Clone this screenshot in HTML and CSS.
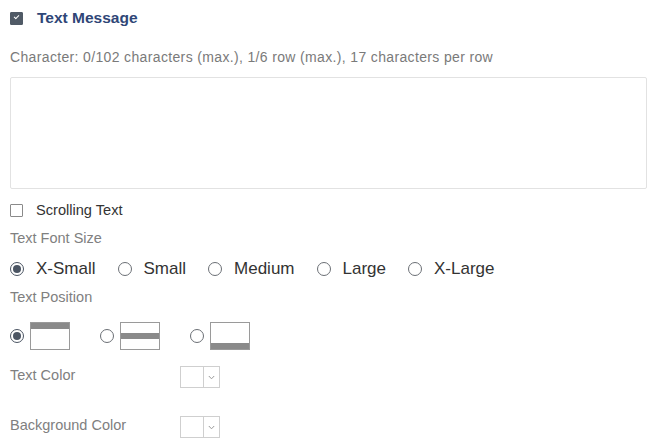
FILE: index.html
```html
<!DOCTYPE html>
<html lang="en">
<head>
    <meta charset="UTF-8">
    <meta name="viewport" content="width=device-width, initial-scale=1.0">
    <title>Text Message</title>
    <link rel="stylesheet" href="styles.css">
</head>
<body>
    <div class="panel">
        <label class="title">
            <input type="checkbox" class="check check-dark" checked>
            <span>Text Message</span>
        </label>

        <div class="hint">Character: 0/102 characters (max.), 1/6 row (max.), 17 characters per row</div>

        <textarea class="message"></textarea>

        <label class="scroll-row">
            <input type="checkbox" class="check">
            <span>Scrolling Text</span>
        </label>

        <div class="field-label label-size">Text Font Size</div>
        <div class="radio-row">
            <label class="radio-item"><input type="radio" name="size" class="radio" checked>X-Small</label>
            <label class="radio-item"><input type="radio" name="size" class="radio">Small</label>
            <label class="radio-item"><input type="radio" name="size" class="radio">Medium</label>
            <label class="radio-item"><input type="radio" name="size" class="radio">Large</label>
            <label class="radio-item"><input type="radio" name="size" class="radio">X-Large</label>
        </div>

        <div class="field-label label-position">Text Position</div>
        <div class="position-row">
            <label class="pos-item">
                <input type="radio" name="pos" class="radio" checked>
                <span class="pos-box pos-top"><span class="pos-bar"></span></span>
            </label>
            <label class="pos-item">
                <input type="radio" name="pos" class="radio">
                <span class="pos-box pos-middle"><span class="pos-bar"></span></span>
            </label>
            <label class="pos-item">
                <input type="radio" name="pos" class="radio">
                <span class="pos-box pos-bottom"><span class="pos-bar"></span></span>
            </label>
        </div>

        <div class="color-row color-text">
            <span class="color-label">Text Color</span>
            <div class="picker">
                <span class="swatch"></span>
                <span class="picker-arrow">
                    <svg width="7" height="5" viewBox="0 0 7 5"><path d="M0.8 1 L3.5 3.8 L6.2 1" fill="none" stroke="#999" stroke-width="1"/></svg>
                </span>
            </div>
        </div>

        <div class="color-row color-bg">
            <span class="color-label">Background Color</span>
            <div class="picker">
                <span class="swatch"></span>
                <span class="picker-arrow">
                    <svg width="7" height="5" viewBox="0 0 7 5"><path d="M0.8 1 L3.5 3.8 L6.2 1" fill="none" stroke="#999" stroke-width="1"/></svg>
                </span>
            </div>
        </div>
    </div>
</body>
</html>
```

FILE: styles.css
```css
body {
    margin: 0;
    background: #fff;
    font-family: "Liberation Sans", Arial, Helvetica, sans-serif;
    color: #333;
}

.panel {
    padding: 10px 6px 0 10px;
}

/* custom checkbox / radio look */
.check {
    appearance: none;
    -webkit-appearance: none;
    margin: 0;
    width: 13px;
    height: 13px;
    border: 1px solid #8a8a8a;
    border-radius: 1px;
    background: #fff;
    flex: none;
    position: relative;
}

.check-dark:checked {
    background: #505a66;
    border-color: #505a66;
}

.check-dark:checked::after {
    content: "";
    position: absolute;
    left: 3px;
    top: 2.5px;
    width: 4px;
    height: 2px;
    border-left: 1.5px solid #fff;
    border-bottom: 1.5px solid #fff;
    transform: rotate(-45deg);
}

.radio {
    appearance: none;
    -webkit-appearance: none;
    margin: 0;
    width: 14px;
    height: 14px;
    border: 1px solid #6b6f75;
    border-radius: 50%;
    background: #fff;
    flex: none;
    position: relative;
}

.radio:checked {
    border-color: #4b5563;
}

.radio:checked::after {
    content: "";
    position: absolute;
    left: 2px;
    top: 2px;
    width: 8px;
    height: 8px;
    border-radius: 50%;
    background: #4b5563;
}

.title {
    display: flex;
    align-items: center;
    gap: 14px;
    height: 16px;
    font-size: 15.5px;
    font-weight: bold;
    color: #2f4677;
}

.hint {
    margin-top: 22px;
    line-height: 18px;
    font-size: 14px;
    letter-spacing: 0.35px;
    color: #7a7a7a;
}

.message {
    display: block;
    box-sizing: border-box;
    width: 637px;
    height: 112px;
    margin: 11px 0 0;
    border: 1px solid #e2e2e2;
    border-radius: 2px;
    resize: none;
    outline: none;
}

.scroll-row {
    display: flex;
    align-items: center;
    gap: 13px;
    height: 20px;
    margin-top: 11px;
    font-size: 14.6px;
    color: #333;
}

.field-label {
    line-height: 20px;
    font-size: 14.5px;
    color: #808080;
}

.label-size {
    margin-top: 8px;
}

.radio-row {
    display: flex;
    align-items: center;
    height: 22px;
    margin-top: 10px;
    font-size: 17px;
    color: #333;
}

.radio-item {
    display: flex;
    align-items: center;
    gap: 12px;
    margin-right: 22px;
}

.label-position {
    margin-top: 7px;
}

.position-row {
    display: flex;
    align-items: center;
    margin-top: 15px;
}

.pos-item {
    display: flex;
    align-items: center;
    gap: 6px;
    margin-right: 30px;
}

.pos-box {
    box-sizing: border-box;
    width: 40px;
    height: 28px;
    border: 1px solid #9a9a9a;
    display: flex;
    flex-direction: column;
}

.pos-bar {
    height: 6px;
    background: #8a8a8a;
}

.pos-middle {
    justify-content: center;
}

.pos-bottom {
    justify-content: flex-end;
}

.color-row {
    display: flex;
    align-items: flex-start;
    font-size: 14.5px;
    color: #808080;
}

.color-text {
    margin-top: 16px;
}

.color-bg {
    margin-top: 28px;
}

.color-label {
    width: 170px;
    line-height: 18px;
}

.picker {
    display: flex;
    box-sizing: border-box;
    height: 22px;
    width: 40px;
    border: 1px solid #cfcfcf;
}

.swatch {
    width: 22px;
    background: #fff;
    border-right: 1px solid #cfcfcf;
}

.picker-arrow {
    flex: 1;
    display: flex;
    align-items: center;
    justify-content: center;
}
```
